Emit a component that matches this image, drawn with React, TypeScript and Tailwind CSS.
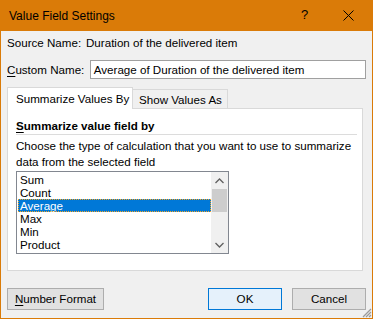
export default function App() {
  const items = ["Sum", "Count", "Average", "Max", "Min", "Product"];
  return (
    <div className="w-[373px] h-[319px] bg-[#DA7B08] flex flex-col px-px pb-px text-[11.6px] text-black font-['Liberation_Sans',Arial,sans-serif] leading-[16px]">
      {/* title bar */}
      <div className="h-[31px] shrink-0 flex items-center relative">
        <span className="pl-[8px] text-[12px]">Value Field Settings</span>
        <span className="absolute left-[300px] top-[7px] text-[13px]">?</span>
        <svg className="absolute left-[342px] top-[10px]" width="11" height="11" viewBox="0 0 11 11">
          <path d="M0.5 0.5 L10.5 10.5 M10.5 0.5 L0.5 10.5" stroke="#000" strokeWidth="1" fill="none" />
        </svg>
      </div>
      {/* body */}
      <div className="flex-1 bg-[#F0F0F0] relative flex flex-col pl-[6px] pr-[6px]">
        <div className="mt-[4px] h-[16px] flex items-center">
          <span className="w-[79px]">Source Name:</span>
          <span>Duration of the delivered item</span>
        </div>
        <div className="mt-[9px] h-[19px] flex items-center">
          <span className="w-[83px]">
            <span className="underline underline-offset-2">C</span>ustom Name:
          </span>
          <div className="w-[277px] h-[19px] border border-[#A0A0A0] bg-white pl-[3px] flex items-center">
            Average of Duration of the delivered item
          </div>
        </div>
        {/* tabs */}
        <div className="mt-[8px] h-[22px] -mb-px flex items-end relative z-10">
          <div className="w-[126px] h-[22px] bg-white border-l border-t border-r border-[#D9D9D9] pl-[8px] pt-[3px]">
            Summarize Values By
          </div>
          <div className="w-[95px] h-[19px] mb-px bg-[#F0F0F0] border-t border-r border-[#D9D9D9] pl-[6px] pt-[2px]">
            Show Values As
          </div>
        </div>
        {/* panel */}
        <div className="w-[356px] h-[163px] bg-white border border-[#D9D9D9] pl-[8px] pt-[9px] flex flex-col">
          <div className="font-bold">
            <span className="underline underline-offset-2">S</span>ummarize value field by
          </div>
          <div className="w-[341px] h-px bg-[#DCDCDC]" />
          <div className="mt-[3px] whitespace-nowrap">
            Choose the type of calculation that you want to use to summarize
            <br />
            data from the selected field
          </div>
          <div className="mt-px w-[213px] h-[83px] border border-[#828790] flex">
            <div className="w-[194px] pl-px pt-px flex flex-col">
              {items.map((it) =>
                it === "Average" ? (
                  <div
                    key={it}
                    className="h-[13px] leading-[13px] pl-[2px] bg-[#0078D7] text-white outline outline-1 outline-dotted outline-[#F5A623] -outline-offset-1"
                  >
                    {it}
                  </div>
                ) : (
                  <div key={it} className="h-[13px] leading-[13px] pl-[2px]">
                    {it}
                  </div>
                )
              )}
            </div>
            <div className="w-[17px] bg-[#F0F0F0] flex flex-col">
              <div className="h-[17px] flex items-center justify-center">
                <svg width="9" height="6" viewBox="0 0 9 6">
                  <path d="M0.5 5 L4.5 1 L8.5 5" stroke="#606060" strokeWidth="1.3" fill="none" />
                </svg>
              </div>
              <div className="h-[23px] mx-px bg-[#CDCDCD]" />
              <div className="flex-1" />
              <div className="h-[17px] flex items-center justify-center">
                <svg width="9" height="6" viewBox="0 0 9 6">
                  <path d="M0.5 1 L4.5 5 L8.5 1" stroke="#606060" strokeWidth="1.3" fill="none" />
                </svg>
              </div>
            </div>
          </div>
        </div>
        {/* buttons */}
        <div className="mt-[17px] flex">
          <div className="w-[97px] h-[22px] bg-[#E1E1E1] border border-[#ADADAD] flex items-center justify-center">
            <span>
              <span className="underline underline-offset-2">N</span>umber Format
            </span>
          </div>
          <div className="flex-1" />
          <div className="w-[74px] h-[22px] bg-[#E5F1FB] border border-[#0078D7] flex items-center justify-center">
            OK
          </div>
          <div className="w-[74px] h-[22px] ml-[10px] bg-[#E1E1E1] border border-[#ADADAD] flex items-center justify-center">
            Cancel
          </div>
        </div>
        <svg className="absolute right-0 bottom-0" width="11" height="11" viewBox="0 0 11 11">
          <path d="M10 2 L2 10 M10 5 L5 10 M10 8 L8 10" stroke="#9A9A9A" strokeWidth="1.2" fill="none" />
        </svg>
      </div>
    </div>
  );
}
